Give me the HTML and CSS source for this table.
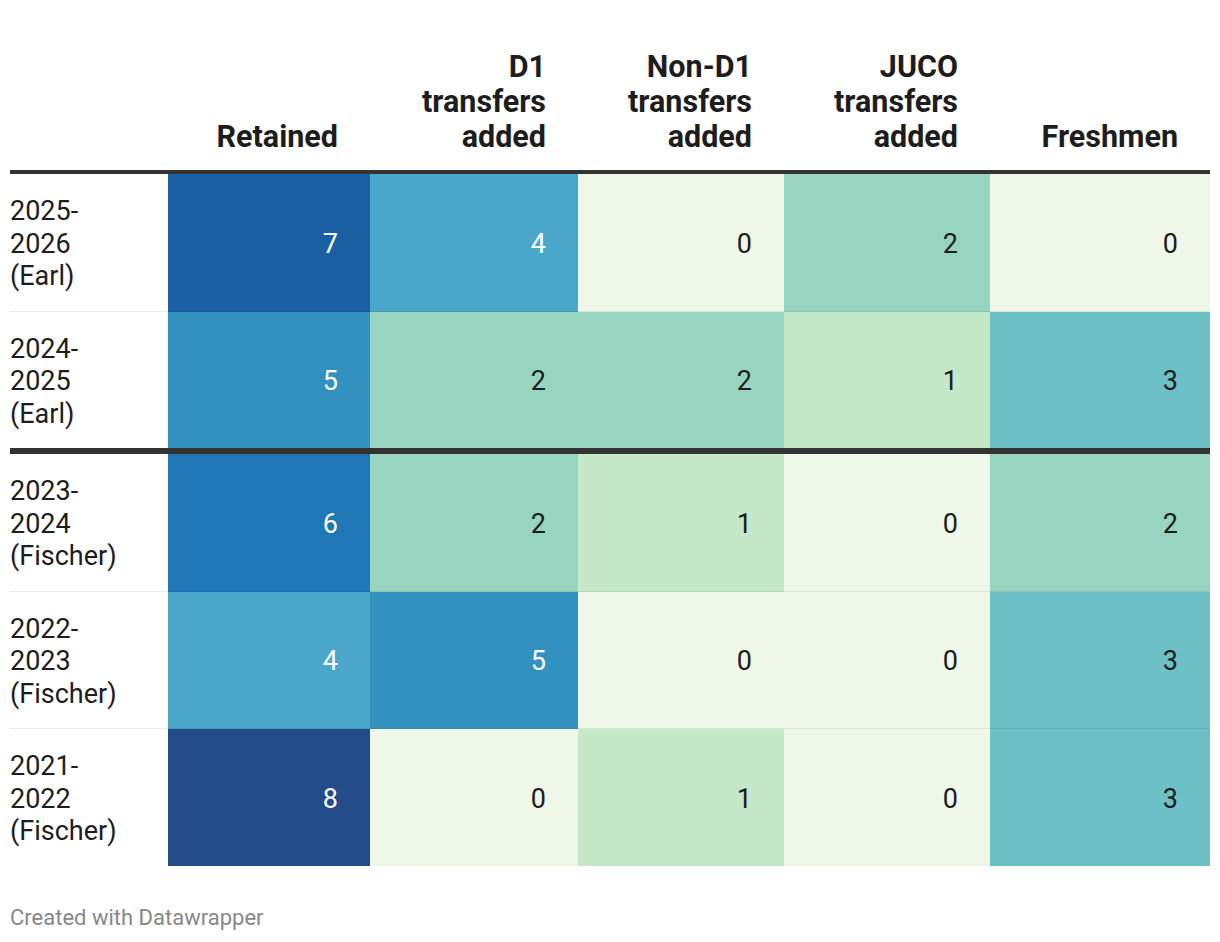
FILE: index.html
```html
<!DOCTYPE html>
<html lang="en">
<head>
<meta charset="utf-8">
<title>Roster composition</title>
<link rel="stylesheet" href="styles.css">
</head>
<body>
<table class="heat">
  <colgroup>
    <col class="c-label">
    <col class="c-ret">
    <col class="c-d1">
    <col class="c-nd1">
    <col class="c-juco">
    <col class="c-fr">
  </colgroup>
  <thead>
    <tr>
      <th></th>
      <th>Retained</th>
      <th>D1<br>transfers<br>added</th>
      <th>Non-D1<br>transfers<br>added</th>
      <th>JUCO<br>transfers<br>added</th>
      <th>Freshmen</th>
    </tr>
  </thead>
  <tbody>
    <tr>
      <td class="label">2025-<br>2026<br>(Earl)</td>
      <td class="v7">7</td>
      <td class="v4">4</td>
      <td class="v0">0</td>
      <td class="v2">2</td>
      <td class="v0">0</td>
    </tr>
    <tr class="sep">
      <td class="label">2024-<br>2025<br>(Earl)</td>
      <td class="v5">5</td>
      <td class="v2">2</td>
      <td class="v2">2</td>
      <td class="v1">1</td>
      <td class="v3">3</td>
    </tr>
    <tr>
      <td class="label">2023-<br>2024<br>(Fischer)</td>
      <td class="v6">6</td>
      <td class="v2">2</td>
      <td class="v1">1</td>
      <td class="v0">0</td>
      <td class="v2">2</td>
    </tr>
    <tr>
      <td class="label">2022-<br>2023<br>(Fischer)</td>
      <td class="v4">4</td>
      <td class="v5">5</td>
      <td class="v0">0</td>
      <td class="v0">0</td>
      <td class="v3">3</td>
    </tr>
    <tr class="last">
      <td class="label">2021-<br>2022<br>(Fischer)</td>
      <td class="v8">8</td>
      <td class="v0">0</td>
      <td class="v1">1</td>
      <td class="v0">0</td>
      <td class="v3">3</td>
    </tr>
  </tbody>
</table>
<p class="credit">Created with Datawrapper</p>
</body>
</html>
```

FILE: styles.css
```css
html, body {
  background: #ffffff;
}
body {
  margin: 10px;
  font-family: Roboto, "Liberation Sans", Arial, sans-serif;
  color: #1d1d1d;
}
.heat {
  width: 1200px;
  table-layout: fixed;
  border-collapse: separate;
  border-spacing: 0;
}
.c-label { width: 158px; }
.c-ret { width: 202px; }
.c-d1 { width: 208px; }
.c-nd1 { width: 206px; }
.c-juco { width: 206px; }
.c-fr { width: 220px; }

.heat th {
  height: 164px;
  box-sizing: border-box;
  padding: 0 32px 16px 0;
  vertical-align: bottom;
  text-align: right;
  font-size: 30.5px;
  line-height: 35px;
  font-weight: 700;
  color: #1d1d1d;
  border-bottom: 4px solid #333333;
}
.heat td {
  padding: 21px 32px 18px 0;
  font-size: 27px;
  line-height: 32.5px;
  text-align: right;
  vertical-align: middle;
  border-bottom: 1px solid rgba(0, 0, 0, 0.07);
  color: #1d1d1d;
}
.heat td.label {
  text-align: left;
  padding-left: 0;
  color: #1d1d1d;
}
.heat tr.sep td {
  border-bottom: 6px solid #333333;
}
.heat tr.last td {
  border-bottom: none;
}

.v0 { background: #eff8e8; }
.v1 { background: #c5e8c9; }
.v2 { background: #98d5c0; }
.v3 { background: #6cc0c6; }
.heat td.v4 { background: #4ba7ca; color: #ffffff; }
.heat td.v5 { background: #3391bf; color: #ffffff; }
.heat td.v6 { background: #1f78b5; color: #ffffff; }
.heat td.v7 { background: #1a60a3; color: #ffffff; }
.heat td.v8 { background: #244b8a; color: #ffffff; }

.credit {
  margin: 39px 0 0 0;
  font-size: 22px;
  line-height: 26px;
  color: #888888;
}
```
